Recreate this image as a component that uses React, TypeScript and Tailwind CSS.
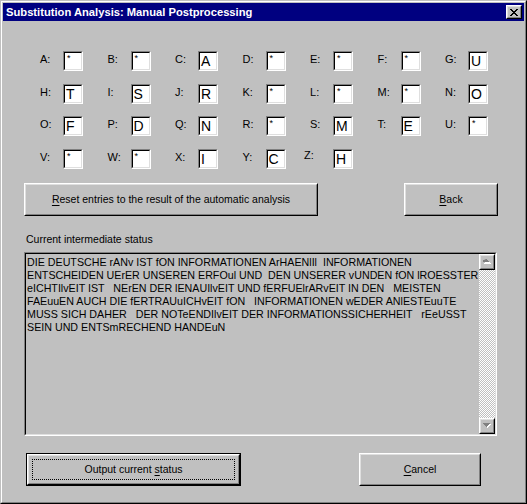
import React from "react";

const rows: [string, string][][] = [
  [["A", "*"], ["B", "*"], ["C", "A"], ["D", "*"], ["E", "*"], ["F", "*"], ["G", "U"]],
  [["H", "T"], ["I", "S"], ["J", "R"], ["K", "*"], ["L", "*"], ["M", "*"], ["N", "O"]],
  [["O", "F"], ["P", "D"], ["Q", "N"], ["R", "*"], ["S", "M"], ["T", "E"], ["U", "*"]],
  [["V", "*"], ["W", "*"], ["X", "I"], ["Y", "C"], ["Z", "H"]],
];

const statusLines = [
  "DIE DEUTSCHE rANv IST fON INFORMATIONEN ArHAENlIl  INFORMATIONEN",
  "ENTSCHEIDEN UErER UNSEREN ERFOul UND  DEN UNSERER vUNDEN fON lROESSTER",
  "eICHTIlvEIT IST   NErEN DER lENAUIlvEIT UND fERFUElrARvEIT IN DEN   MEISTEN",
  "FAEuuEN AUCH DIE fERTRAUuICHvEIT fON   INFORMATIONEN wEDER ANlESTEuuTE",
  "MUSS SICH DAHER   DER NOTeENDIlvEIT DER INFORMATIONSSICHERHEIT   rEeUSST",
  "SEIN UND ENTSmRECHEND HANDEuN",
];

// raised 3d button frame, win95 style
function Raised({ className = "", children }: { className?: string; children?: React.ReactNode }) {
  return (
    <div className={`border border-t-white border-l-white border-b-black border-r-black ${className}`}>
      <div className="h-full w-full border border-t-[#dfdfdf] border-l-[#dfdfdf] border-b-[#808080] border-r-[#808080] flex items-center justify-center">
        {children}
      </div>
    </div>
  );
}

function Sunken({ className = "", children }: { className?: string; children?: React.ReactNode }) {
  return (
    <div className={`border border-t-[#808080] border-l-[#808080] border-b-white border-r-white ${className}`}>
      <div className="h-full w-full border border-t-black border-l-black border-b-[#dfdfdf] border-r-[#dfdfdf]">
        {children}
      </div>
    </div>
  );
}

function Arrow({ up }: { up: boolean }) {
  return (
    <svg width="8" height="5" viewBox="0 0 8 5">
      <path
        d={up ? "M4 1h1v1h1v1h1v1h1v1h-7v-1h1v-1h1v-1z" : "M1 1h7v1h-1v1h-1v1h-1v1h-1v-1h-1v-1h-1v-1h-1z"}
        fill="#fff"
      />
      <path
        d={up ? "M3 0h1v1h1v1h1v1h-7v-1h1v-1h1z" : "M0 0h7v1h-1v1h-1v1h-1v1h-1v-1h-1v-1h-1v-1h-1z"}
        fill="#808080"
      />
    </svg>
  );
}

export default function App() {
  return (
    <div className="w-[527px] h-[504px] bg-[#c0c0c0] text-black font-['Liberation_Sans',Arial,sans-serif] text-[10.5px] leading-[13px] select-none">
      <div className="h-full border border-t-[#c0c0c0] border-l-[#c0c0c0] border-b-black border-r-black">
        <div className="h-full border border-t-white border-l-white border-b-[#808080] border-r-[#808080] p-px flex flex-col">
          {/* title bar */}
          <div className="h-[18px] bg-[#000080] flex items-center justify-between pl-[3px] pr-[2px]">
            <span className="text-white font-bold text-[11.2px]">
              Substitution Analysis: Manual Postprocessing
            </span>
            <Raised className="w-[16px] h-[14px] bg-[#c0c0c0]">
              <svg width="8" height="7" viewBox="0 0 8 7">
                <path d="M0 0h2v1h1v1h2v-1h1v-1h2v1h-1v1h-1v1h-1v1h1v1h1v1h1v1h-2v-1h-1v-1h-2v1h-1v1h-2v-1h1v-1h1v-1h1v-1h-1v-1h-1v-1h-1z" fill="#000" />
              </svg>
            </Raised>
          </div>

          {/* letter grid */}
          <div className="mt-[30px] ml-[37px] flex flex-col gap-y-[12.5px]">
            {rows.map((row, ri) => (
              <div key={ri} className="grid grid-cols-[repeat(7,67.5px)] h-[20px]">
                {row.map(([label, val]) => (
                  <div key={label} className="flex items-start">
                    <span className={`w-[23px] pt-[2px] text-[11px] ${label === "Z" ? "-ml-[6px] mr-[6px] -mt-[2px]" : ""}`}>
                      {label}:
                    </span>
                    <Sunken className="w-[20px] h-[20px] bg-white">
                      {val === "*" ? (
                        <span className="block pl-[2px] pt-[1px] text-[9px] leading-[9px]">*</span>
                      ) : (
                        <span className="block pl-[1px] text-[14px] leading-[16px]">{val}</span>
                      )}
                    </Sunken>
                  </div>
                ))}
              </div>
            ))}
          </div>

          {/* reset / back */}
          <div className="mt-[14px] ml-[21px] flex">
            <Raised className="w-[294px] h-[33px]">
              <span>
                <span className="underline underline-offset-2">R</span>eset entries to the result of the automatic analysis
              </span>
            </Raised>
            <Raised className="ml-[86px] w-[94px] h-[33px]">
              <span>
                <span className="underline underline-offset-2">B</span>ack
              </span>
            </Raised>
          </div>

          <div className="mt-[17px] ml-[23px]">Current intermediate status</div>

          {/* status text */}
          <Sunken className="mt-[6px] ml-[21px] w-[473px] h-[184px]">
            <div className="h-full flex">
              <div className="flex-1 min-w-0 overflow-hidden pl-[1px] pt-[2px] whitespace-pre text-[10.7px] leading-[13px]">
                {statusLines.map((l, i) => (
                  <div key={i}>{l}</div>
                ))}
              </div>
              <div className="w-[16px] shrink-0 flex flex-col bg-[repeating-conic-gradient(#ffffff_0_25%,#c0c0c0_0_50%)] bg-[length:2px_2px]">
                <Raised className="w-[16px] h-[16px] bg-[#c0c0c0]">
                  <Arrow up />
                </Raised>
                <div className="flex-1" />
                <Raised className="w-[16px] h-[16px] bg-[#c0c0c0]">
                  <Arrow up={false} />
                </Raised>
              </div>
            </div>
          </Sunken>

          {/* bottom buttons */}
          <div className="mt-[17px] ml-[23px] flex">
            <div className="w-[215px] h-[33px] border border-black">
              <Raised className="h-full w-full">
                <div className="h-[calc(100%-6px)] w-[calc(100%-6px)] border border-dotted border-black flex items-center justify-center">
                  <span>
                    Output current <span className="underline underline-offset-2">s</span>tatus
                  </span>
                </div>
              </Raised>
            </div>
            <Raised className="ml-[118px] w-[122px] h-[33px]">
              <span>
                <span className="underline underline-offset-2">C</span>ancel
              </span>
            </Raised>
          </div>
        </div>
      </div>
    </div>
  );
}
